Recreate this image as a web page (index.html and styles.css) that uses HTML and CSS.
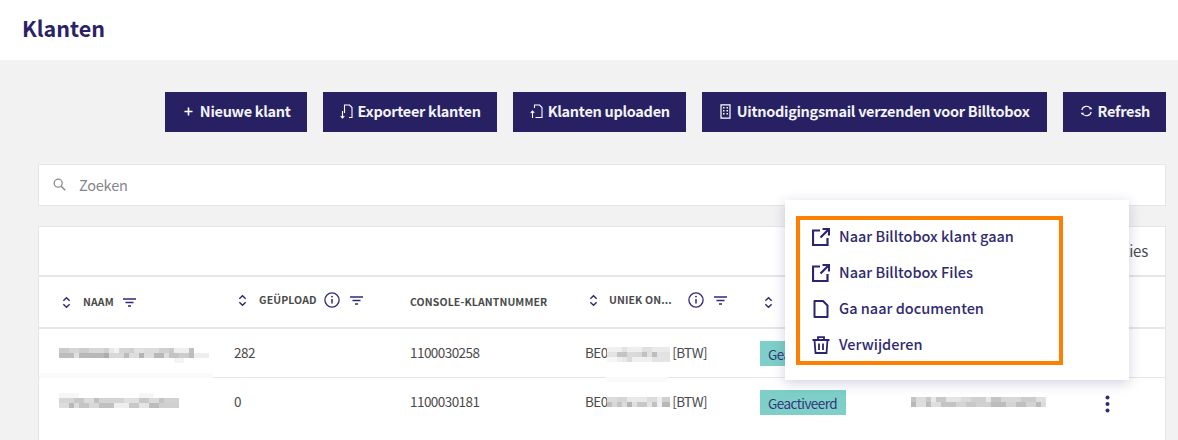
FILE: index.html
```html
<!DOCTYPE html>
<html lang="nl">
<head>
<meta charset="utf-8">
<title>Klanten</title>
<link rel="stylesheet" href="styles.css">
</head>
<body>
<svg class="defs" width="0" height="0" aria-hidden="true">
  <symbol id="sort" viewBox="0 0 10 14"><path d="M1.5 5 5 1.7 8.5 5M1.5 9 5 12.3 8.5 9" fill="none" stroke="currentColor" stroke-width="1.6"/></symbol>
  <symbol id="filter" viewBox="0 0 13 9"><path d="M0 1h13M2.5 4.5h8M5 8h3" fill="none" stroke="currentColor" stroke-width="1.3"/></symbol>
  <symbol id="info" viewBox="0 0 16 16"><circle cx="8" cy="8" r="7.1" fill="none" stroke="currentColor" stroke-width="1.3"/><path d="M8 7v4.6" stroke="currentColor" stroke-width="1.5"/><circle cx="8" cy="4.6" r=".95" fill="currentColor"/></symbol>
  <symbol id="ext" viewBox="0 0 18 18"><path d="M8 2.5H1v14.500h14.500V10M10.500 1H17v6.500M17 1 8.500 9.500" fill="none" stroke="currentColor" stroke-width="2.200"/></symbol>
</svg>

<header class="topbar"><h1 class="title">Klanten</h1></header>

<main class="content">
  <div class="actions">
    <button class="btn"><svg class="ico-plus" width="9" height="9" viewBox="0 0 10 10"><path d="M5 .5v9M.5 5h9" stroke="#fff" stroke-width="1.800"/></svg>Nieuwe klant</button>
    <button class="btn btn-tight"><svg width="13" height="15" viewBox="0 0 13 15"><path d="M4.500 9V1h5l2.500 2.500V13.500H9M2.500 7v7M.7 12.200 2.500 14l1.800-1.800" fill="none" stroke="#fff" stroke-width="1.100"/></svg>Exporteer klanten</button>
    <button class="btn btn-tight"><svg width="13" height="15" viewBox="0 0 13 15"><path d="M4.500 4V1h5l2.500 2.500V13.500H5.500M2.500 14V7M.7 8.800 2.500 7l1.800 1.800" fill="none" stroke="#fff" stroke-width="1.100"/></svg>Klanten uploaden</button>
    <button class="btn btn-wide"><svg width="11" height="15" viewBox="0 0 11 15"><path d="M1 .8h9v13.400H1z" fill="none" stroke="#fff" stroke-width="1.200"/><path d="M3 3h1.500v1.500H3zM6.500 3H8v1.500H6.500zM3 6h1.500v1.500H3zM6.500 6H8v1.500H6.500zM3 9h1.500v1.500H3zM6.500 9H8v1.500H6.500z" fill="#fff"/></svg>Uitnodigingsmail verzenden voor Billtobox</button>
    <button class="btn btn-tight"><svg width="13" height="12" viewBox="0 0 13 12"><path d="M1.800 5A4.800 4.800 0 0 1 10.500 3.500M11.200 7A4.800 4.800 0 0 1 2.500 8.500" fill="none" stroke="#fff" stroke-width="1.100"/><path d="M9 4.200h3.300L10.800 2zM4 7.800H.7L2.200 10z" fill="#fff"/></svg>Refresh</button>
  </div>

  <div class="search">
    <svg width="13" height="13" viewBox="0 0 13 13"><circle cx="5.200" cy="5.200" r="4" fill="none" stroke="#8a8a8a" stroke-width="1.300"/><path d="m8.200 8.200 4 4" stroke="#8a8a8a" stroke-width="1.500"/></svg>
    <span>Zoeken</span>
  </div>

  <section class="card">
    <div class="toolbar">Opties</div>
    <div class="row head">
      <div class="th"><svg class="i-sort"><use href="#sort"/></svg><span class="lbl">Naam</span><svg class="i-filter"><use href="#filter"/></svg></div>
      <div class="th th-up th-geup"><svg class="i-sort"><use href="#sort"/></svg><span class="lbl">Geüpload</span><svg class="i-info"><use href="#info"/></svg><svg class="i-filter"><use href="#filter"/></svg></div>
      <div class="th"><span class="lbl">Console-klantnummer</span></div>
      <div class="th th-up th-uniek"><svg class="i-sort"><use href="#sort"/></svg><span class="lbl">Uniek on...</span><svg class="i-info"><use href="#info"/></svg><svg class="i-filter"><use href="#filter"/></svg></div>
      <div class="th th-status"><svg class="i-sort"><use href="#sort"/></svg><span class="lbl">Status</span></div>
      <div class="th"></div>
    </div>

    <div class="row body">
      <div class="td">
        <svg class="mosaic at-19" width="150" height="15" viewBox="0 0 30 3" shape-rendering="crispEdges" fill="none">
          <path stroke="#cbcbcb" d="M0 .5h2"/><path stroke="#d5d5d5" d="M2 .5h2"/><path stroke="#cdcdcd" d="M4 .5h2"/><path stroke="#d8d8d8" d="M6 .5h3"/><path stroke="#cfcfcf" d="M9 .5h1"/><path stroke="#e8e8e8" d="M10 .5h1"/><path stroke="#f2f2f2" d="M11 .5h1"/><path stroke="#d5d5d5" d="M12 .5h2"/><path stroke="#d0d0d0" d="M14 .5h1"/><path stroke="#e0e0e0" d="M15 .5h2"/><path stroke="#dcdcdc" d="M17 .5h3"/><path stroke="#d0d0d0" d="M20 .5h2"/><path stroke="#c8c8c8" d="M22 .5h1"/><path stroke="#eee" d="M23 .5h3"/><path stroke="#c0c0c0" d="M26 .5h1"/>
          <path stroke="#bdbdbd" d="M0 1.500h3"/><path stroke="#e0e0e0" d="M3 1.500h1"/><path stroke="#b8b8b8" d="M4 1.500h5"/><path stroke="#acacac" d="M9 1.500h1"/><path stroke="#d8d8d8" d="M10 1.500h3"/><path stroke="#bbb" d="M13 1.500h1"/><path stroke="#ddd" d="M14 1.500h2"/><path stroke="#b4b4b4" d="M16 1.500h1"/><path stroke="#ddd" d="M17 1.500h2"/><path stroke="#b8b8b8" d="M19 1.500h2"/><path stroke="#ddd" d="M21 1.500h1"/><path stroke="#c4c4c4" d="M22 1.500h2"/><path stroke="#ccc" d="M24 1.500h2"/><path stroke="#bbb" d="M26 1.500h1"/><path stroke="#eee" d="M27 1.500h3"/>
          <path stroke="#f4f4f4" d="M23 2.500h2"/>
        </svg>
        <span class="smudge smudge-name"></span>
      </div>
      <div class="td">282</div>
      <div class="td">1100030258</div>
      <div class="td td-uniek">BE0<svg class="mosaic at-18" width="63" height="15" viewBox="0 0 12.600 3" shape-rendering="crispEdges" fill="none">
          <path stroke="#f0f0f0" d="M0 .5h3"/><path stroke="#e2e2e2" d="M3 .5h1"/><path stroke="#eee" d="M4 .5h3"/><path stroke="#e0e0e0" d="M7 .5h2"/><path stroke="#eaeaea" d="M9 .5h3.600"/>
          <path stroke="#e4e4e4" d="M0 1.500h2"/><path stroke="#c4c4c4" d="M2 1.500h2"/><path stroke="#dadada" d="M4 1.500h2"/><path stroke="#d8d8d8" d="M6 1.500h1"/><path stroke="#c0c0c0" d="M7 1.500h1"/><path stroke="#e0e0e0" d="M8 1.500h1"/><path stroke="#bdbdbd" d="M9 1.500h1"/><path stroke="#e2e2e2" d="M10 1.500h2.600"/>
          <path stroke="#f6f6f6" d="M0 2.500h2"/><path stroke="#eee" d="M2 2.500h1"/><path stroke="#e8e8e8" d="M3 2.500h1"/><path stroke="#dcdcdc" d="M4 2.500h1"/><path stroke="#f0f0f0" d="M5 2.500h4"/><path stroke="#e4e4e4" d="M9 2.500h3.600"/>
        </svg> [BTW]<span class="smudge smudge-uniek"></span></div>
      <div class="td"><span class="badge">Geactiveerd</span></div>
      <div class="td"></div>
    </div>

    <div class="row body">
      <div class="td">
        <svg class="mosaic at-15" width="120" height="15" viewBox="0 0 24 3" shape-rendering="crispEdges" fill="none">
          <path stroke="#f6f6f6" d="M0 .5h4M16 .5h3"/><path stroke="#d6d6d6" d="M0 1.500h3"/><path stroke="#c8c8c8" d="M3 1.500h2"/><path stroke="#dcdcdc" d="M5 1.500h2"/><path stroke="#c0c0c0" d="M7 1.500h1"/><path stroke="#d4d4d4" d="M8 1.500h5"/><path stroke="#e0e0e0" d="M13 1.500h3"/><path stroke="#c8c8c8" d="M16 1.500h2"/><path stroke="#dadada" d="M18 1.500h2"/><path stroke="#c4c4c4" d="M20 1.500h1"/><path stroke="#d2d2d2" d="M21 1.500h3"/>
          <path stroke="#dcdcdc" d="M0 2.500h2"/><path stroke="#b8b8b8" d="M2 2.500h1"/><path stroke="#dcdcdc" d="M3 2.500h1"/><path stroke="#c4c4c4" d="M4 2.500h2"/><path stroke="#d8d8d8" d="M6 2.500h2"/><path stroke="#c0c0c0" d="M8 2.500h3"/><path stroke="#eee" d="M11 2.500h3"/><path stroke="#c8c8c8" d="M14 2.500h2"/><path stroke="#e4e4e4" d="M16 2.500h2"/><path stroke="#bcbcbc" d="M18 2.500h2"/><path stroke="#cfcfcf" d="M20 2.500h4"/>
        </svg>
      </div>
      <div class="td">0</div>
      <div class="td">1100030181</div>
      <div class="td td-uniek">BE0<svg class="mosaic at-19" width="63" height="10" viewBox="0 0 12.600 2" shape-rendering="crispEdges" fill="none">
          <path stroke="#dcdcdc" d="M0 .5h2"/><path stroke="#d6d6d6" d="M2 .5h2"/><path stroke="#e8e8e8" d="M4 .5h4"/><path stroke="#dcdcdc" d="M8 .5h2"/><path stroke="#eee" d="M10 .5h1"/><path stroke="#d0d0d0" d="M11 .5h1.600"/>
          <path stroke="#c0c0c0" d="M0 1.500h1"/><path stroke="#d8d8d8" d="M1 1.500h1"/><path stroke="#c4c4c4" d="M2 1.500h1"/><path stroke="#dcdcdc" d="M3 1.500h1"/><path stroke="#b4b4b4" d="M4 1.500h1"/><path stroke="#e0e0e0" d="M5 1.500h1"/><path stroke="#c8c8c8" d="M6 1.500h2"/><path stroke="#e4e4e4" d="M8 1.500h1"/><path stroke="#c0c0c0" d="M9 1.500h1"/><path stroke="#f0f0f0" d="M10 1.500h1"/><path stroke="#b8b8b8" d="M11 1.500h1.600"/>
        </svg> [BTW]</div>
      <div class="td"><span class="badge">Geactiveerd</span></div>
      <div class="td td-last">
        <svg class="mosaic at-19" width="135" height="10" viewBox="0 0 27 2" shape-rendering="crispEdges" fill="none">
          <path stroke="#c4c4c4" d="M0 .5h1"/><path stroke="#dcdcdc" d="M1 .5h2"/><path stroke="#c8c8c8" d="M3 .5h1"/><path stroke="#e8e8e8" d="M4 .5h1"/><path stroke="#c8c8c8" d="M5 .5h2"/><path stroke="#e4e4e4" d="M7 .5h3"/><path stroke="#dadada" d="M10 .5h2"/><path stroke="#d0d0d0" d="M12 .5h3"/><path stroke="#e8e8e8" d="M15 .5h1"/><path stroke="#c4c4c4" d="M16 .5h2"/><path stroke="#d8d8d8" d="M18 .5h4"/><path stroke="#ccc" d="M22 .5h3"/><path stroke="#e0e0e0" d="M25 .5h2"/>
          <path stroke="#b8b8b8" d="M0 1.500h1"/><path stroke="#dedede" d="M1 1.500h2"/><path stroke="#bcbcbc" d="M3 1.500h1"/><path stroke="#dedede" d="M4 1.500h2"/><path stroke="#c4c4c4" d="M6 1.500h3"/><path stroke="#d4d4d4" d="M9 1.500h2"/><path stroke="#c8c8c8" d="M11 1.500h2"/><path stroke="#d0d0d0" d="M13 1.500h3"/><path stroke="#bcbcbc" d="M16 1.500h3"/><path stroke="#d4d4d4" d="M19 1.500h2"/><path stroke="#c0c0c0" d="M21 1.500h2"/><path stroke="#d4d4d4" d="M23 1.500h2"/><path stroke="#bbb" d="M25 1.500h1"/><path stroke="#dcdcdc" d="M26 1.500h1"/>
        </svg>
        <svg class="kebab" width="5" height="18" viewBox="0 0 5 18"><circle cx="2.500" cy="2.500" r="2"/><circle cx="2.500" cy="9" r="2"/><circle cx="2.500" cy="15.500" r="2"/></svg>
      </div>
    </div>
  </section>
</main>

<div class="menu">
  <ul class="menu-list">
    <li class="menu-item"><svg class="mi"><use href="#ext"/></svg>Naar Billtobox klant gaan</li>
    <li class="menu-item"><svg class="mi"><use href="#ext"/></svg>Naar Billtobox Files</li>
    <li class="menu-item"><svg class="mi" viewBox="0 0 18 18"><path d="M2.500 1h8.500L15.500 5.500V17h-13z" fill="none" stroke="currentColor" stroke-width="2" stroke-linejoin="round"/></svg>Ga naar documenten</li>
    <li class="menu-item"><svg class="mi" viewBox="0 0 18 18"><path d="M.5 4h17M6 4V1.200h6V4M2.500 4l1 13h11l1-13M7 7.500v6.500M11 7.500v6.500" fill="none" stroke="currentColor" stroke-width="1.800"/></svg>Verwijderen</li>
  </ul>
</div>
</body>
</html>
```
FILE: styles.css
```css
* { box-sizing: border-box; }
html, body { margin: 0; padding: 0; }
body {
  width: 1178px;
  height: 440px;
  overflow: hidden;
  background: #f2f2f2;
  color: #4a4a4a;
  font-family: "Noto Sans CJK SC", "Noto Sans", sans-serif;
  font-size: 15px;
  position: relative;
}
.defs { position: absolute; }

.topbar {
  height: 60px;
  background: #fff;
  padding: 0 22px 4px;
  display: flex;
  align-items: center;
}
.title {
  margin: 0;
  font-size: 21.5px;
  line-height: 30px;
  font-weight: 700;
  color: #2a2166;
}

.content { padding: 32px 12px 0 38px; }

.actions {
  display: flex;
  justify-content: flex-end;
  gap: 16px;
}
.btn {
  height: 40px;
  border: 0;
  background: #272163;
  color: #f3f3f8;
  font: 700 14.5px/20px "Noto Sans CJK SC", "Noto Sans", sans-serif;
  letter-spacing: -.3px;
  white-space: nowrap;
  padding: 0 16px 2px 19px;
  display: flex;
  align-items: center;
  gap: 7px;
}
.btn svg { flex: none; }
.btn-tight { gap: 5px; padding-left: 17px; }
.btn-wide { gap: 6px; padding-left: 18px; padding-right: 17px; }

.search {
  margin-top: 32px;
  height: 42px;
  background: #fff;
  border: 1px solid #e6e6e6;
  padding: 0 0 2px 14px;
  display: flex;
  align-items: center;
  gap: 13px;
  color: #85858a;
  font-size: 14.5px;
  letter-spacing: -.2px;
}

.card {
  margin-top: 20px;
  height: 214px;
  background: #fff;
  border: 1px solid #e6e6e6;
  border-bottom: 0;
}
.toolbar {
  height: 50px;
  border-bottom: 2px solid #e6e6e6;
  padding: 0 17px 2px 0;
  display: flex;
  align-items: center;
  justify-content: flex-end;
  font-size: 15px;
  letter-spacing: -.2px;
}

.row {
  display: grid;
  grid-template-columns: 175px 176px 175px 175px 151px 1fr;
  padding-left: 20px;
}
.head { height: 52px; border-bottom: 2px solid #e6e6e6; }
.body { height: 49px; border-bottom: 1px solid #e6e6e6; }
.body:last-child { border-bottom-color: transparent; }

.th { display: flex; align-items: center; color: #4a4a4a; }
.th-up { padding-bottom: 4px; }
.lbl {
  font-size: 10.5px;
  line-height: 14px;
  font-weight: 700;
  letter-spacing: .12px;
  text-transform: uppercase;
  white-space: nowrap;
}
.i-sort { width: 9px; height: 13px; color: #2e2a7a; margin: 0 12px 0 3px; flex: none; }
.i-filter { width: 13px; height: 9px; color: #2e2a7a; margin-left: 10px; flex: none; }
.lbl + .i-filter { margin-left: 9px; }
.i-info { width: 16px; height: 16px; color: #2e2a7a; margin-left: 7px; flex: none; }
.th-geup .i-sort { margin-left: 4px; }
.th-uniek .i-sort { margin-left: 4px; margin-right: 11px; }
.th-uniek .i-info { margin-left: 16px; }
.th-status .i-sort { margin-left: 4px; }

.td {
  display: flex;
  align-items: center;
  font-size: 13.5px;
  letter-spacing: -.55px;
  position: relative;
  white-space: pre;
  padding-bottom: 2px;
}
.mosaic { flex: none; align-self: flex-start; }
.at-15 { margin-top: 15px; }
.at-18 { margin-top: 18px; }
.at-19 { margin-top: 19px; }
.td-uniek .mosaic { margin-left: -1px; }
.td-last { justify-content: flex-start; }
.kebab { fill: #2e2a7a; margin: 5px 0 0 59px; flex: none; }

.badge {
  display: flex;
  align-items: center;
  width: 86px;
  height: 25px;
  margin-top: 3px;
  padding-left: 8px;
  background: #7dcfc7;
  color: #34347a;
}

.smudge { position: absolute; background: #fafafa; }
.smudge-name { left: -19px; bottom: -1px; width: 173px; height: 5px; }
.smudge-uniek { left: 21px; bottom: -5px; width: 62px; height: 5px; z-index: 1; }

.menu {
  position: absolute;
  left: 785px;
  top: 200px;
  width: 344px;
  height: 180px;
  background: #fff;
  box-shadow: 0 3px 12px rgba(50, 45, 120, .22);
  padding: 16px 66px 15px 11px;
}
.menu-list {
  list-style: none;
  margin: 0;
  height: 149px;
  border: 4px solid #ff8000;
  padding: 0 0 0 12px;
  display: flex;
  flex-direction: column;
  gap: 3px;
}
.menu-item {
  height: 33px;
  padding-bottom: 2px;
  display: flex;
  align-items: center;
  gap: 9px;
  color: #2f2b70;
  font-size: 14.5px;
  font-weight: 500;
  white-space: nowrap;
}
.mi { width: 18px; height: 18px; color: #2a2570; flex: none; margin-top: 2px; }
```
